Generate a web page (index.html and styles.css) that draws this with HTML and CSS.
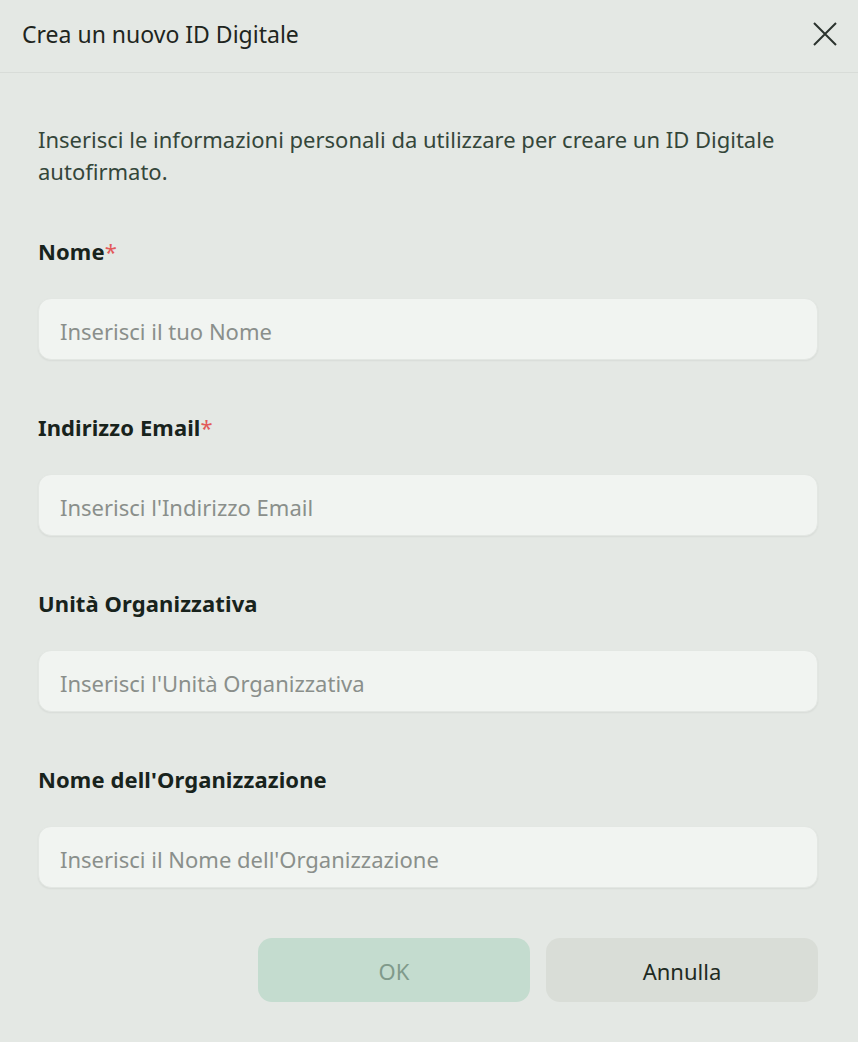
FILE: index.html
```html
<!DOCTYPE html>
<html lang="it">
	<head>
		<meta charset="UTF-8" />
		<meta name="viewport" content="width=device-width, initial-scale=1.0" />
		<title>Crea un nuovo ID Digitale</title>
		<link rel="stylesheet" href="styles.css">
	</head>
	<body>
		<div class="dialog">
			<div class="dialog__header">
				<h1 class="dialog__title">Crea un nuovo ID Digitale</h1>
				<button class="dialog__close" aria-label="Chiudi">
					<svg width="26" height="26" viewBox="0 0 26 26">
						<path d="M2 2 L24 24 M24 2 L2 24" stroke="#2b332e" stroke-width="2" fill="none" />
					</svg>
				</button>
			</div>

			<div class="dialog__body">
				<p class="intro">Inserisci le informazioni personali da utilizzare per creare un ID Digitale autofirmato.</p>

				<div class="field">
					<label class="field__label">Nome<span class="req">*</span></label>
					<input class="field__input" type="text" placeholder="Inserisci il tuo Nome" />
				</div>

				<div class="field">
					<label class="field__label">Indirizzo Email<span class="req">*</span></label>
					<input class="field__input" type="text" placeholder="Inserisci l'Indirizzo Email" />
				</div>

				<div class="field">
					<label class="field__label">Unità Organizzativa</label>
					<input class="field__input" type="text" placeholder="Inserisci l'Unità Organizzativa" />
				</div>

				<div class="field">
					<label class="field__label">Nome dell'Organizzazione</label>
					<input class="field__input" type="text" placeholder="Inserisci il Nome dell'Organizzazione" />
				</div>

				<div class="actions">
					<button class="btn btn--ok" disabled>OK</button>
					<button class="btn btn--cancel">Annulla</button>
				</div>
			</div>
		</div>
	</body>
</html>
```

FILE: styles.css
```css
* {
	margin: 0;
	box-sizing: border-box;
}

body {
	background: #e4e8e4;
	font-family: "Noto Sans", "Open Sans", sans-serif;
	color: #1b261f;
}

.dialog {
	width: 858px;
	height: 1042px;
}

.dialog__header {
	height: 73px;
	display: flex;
	align-items: center;
	justify-content: space-between;
	padding: 0 20px 4px 22px;
	border-bottom: 1px solid #d8dcd8;
}

.dialog__title {
	font-family: "Noto Sans", sans-serif;
	font-stretch: semi-condensed;
	font-weight: 400;
	font-size: 23px;
	color: #1e2520;
}

.dialog__close {
	background: none;
	border: none;
	padding: 0;
	width: 26px;
	height: 26px;
	display: flex;
}

.dialog__body {
	padding: 50px 40px 0 38px;
}

.intro {
	font-size: 22px;
	line-height: 32px;
	color: #34463a;
	margin-bottom: 48px;
}

.field {
	margin-bottom: 51px;
}

.field__label {
	display: block;
	font-size: 22px;
	font-weight: 700;
	letter-spacing: 0.1px;
	line-height: 32px;
	color: #18231c;
	margin-bottom: 31px;
}

.req {
	color: #e25a5a;
	font-weight: 400;
}

.field__input {
	display: block;
	width: 100%;
	height: 62px;
	border: 1px solid #e3e7e3;
	border-radius: 13px;
	background: #f1f4f1;
	box-shadow: 0 1px 2px rgba(0, 0, 0, 0.06);
	padding: 3px 21px 0;
	font-family: "Noto Sans", sans-serif;
	font-size: 22px;
	color: #1b261f;
	outline: none;
}

.field__input::placeholder {
	color: #8a8f8b;
}

.actions {
	display: flex;
	justify-content: flex-end;
	gap: 16px;
	margin-top: -1px;
}

.btn {
	width: 272px;
	height: 64px;
	border: none;
	border-radius: 14px;
	padding-top: 2px;
	font-family: "Noto Sans", sans-serif;
	font-size: 22px;
}

.btn--ok {
	background: #c4dccf;
	color: #809a8b;
}

.btn--cancel {
	background: #d9ddd7;
	color: #1e2a22;
}
```
